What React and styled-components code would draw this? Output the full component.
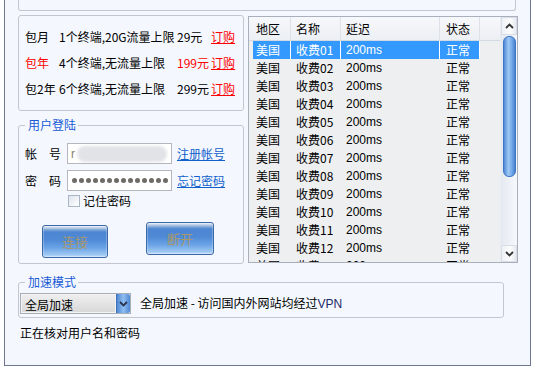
import React from 'react';
import styled, { createGlobalStyle } from 'styled-components';

const Global = createGlobalStyle`
  html, body { margin: 0; padding: 0; background: #ffffff; }
  body { font-family: "Noto Sans CJK SC", sans-serif; font-size: 12px; }
  * { box-sizing: border-box; }
`;

const CJK = `"Noto Sans CJK SC", sans-serif`;
const LATIN = `"Liberation Sans", "Noto Sans CJK SC", sans-serif`;

const Window = styled.div`
  margin-left: 4px;
  width: 527px;
  height: 366px;
  border: 1px solid #6d7890;
  border-top: none;
  background: #f4f8fe;
  padding-left: 13px;
  display: flex;
  flex-direction: column;
  color: #000;
  font: 12px/16px ${CJK};
`;

const TopBox = styled.div`
  width: 498px;
  height: 11px;
  border: 1px solid #c3c6ce;
  border-top: none;
  border-radius: 0 0 3px 3px;
`;

const MainRow = styled.div`
  display: flex;
  align-items: flex-start;
  gap: 4px;
  margin-top: 4px;
`;

const LeftCol = styled.div`
  width: 226px;
  display: flex;
  flex-direction: column;
`;

const PriceBox = styled.div`
  height: 96px;
  border: 1px solid #c3c6ce;
  border-radius: 3px;
  padding: 8px 0 0 6px;
`;

const PriceRow = styled.div`
  display: grid;
  grid-template-columns: 34px 118px 34px auto;
  height: 26px;
  align-items: center;
  white-space: nowrap;
`;

const Cell = styled.span`
  color: ${p => (p.$red ? '#ff0000' : '#000')};
`;

const BuyLink = styled.a`
  color: #ff0000;
  text-decoration: underline;
  cursor: pointer;
`;

const Group = styled.fieldset`
  margin: ${p => p.$mt}px 0 0 0;
  min-width: 0;
  width: ${p => p.$w}px;
  border: 1px solid #c3c6ce;
  border-radius: 3px;
  padding: ${p => p.$pad};
`;

const Legend = styled.legend`
  color: #1a5ad6;
  font: 12px/14px ${CJK};
  padding: 0 2px 0 3px;
  margin-left: ${p => p.$ml}px;
`;

const FormRow = styled.div`
  display: flex;
  align-items: center;
  height: 21px;
  margin-top: ${p => p.$mt || 0}px;
`;

const Label = styled.span`
  width: 42px;
  white-space: pre;
`;

const InputBox = styled.div`
  width: 105px;
  height: 21px;
  border: 1px solid #b6b6be;
  background: #ffffff;
  display: flex;
  align-items: center;
  padding-left: 3px;
  overflow: hidden;
`;

const Masked = styled.span`
  color: #8a7f6a;
  font: 12px ${LATIN};
`;

const Blur = styled.div`
  width: 90px;
  height: 16px;
  margin-left: 2px;
  border-radius: 8px;
  background: #e2e3e7;
  filter: blur(1.5px);
`;

const Dots = styled.div`
  display: flex;
  gap: 2px;
  padding-left: 1px;
`;

const Dot = styled.span`
  width: 5px;
  height: 5px;
  border-radius: 50%;
  background: #6e6a66;
`;

const TextLink = styled.a`
  margin-left: 5px;
  color: #1060cc;
  text-decoration: underline;
  cursor: pointer;
`;

const CheckRow = styled.label`
  display: flex;
  align-items: center;
  height: 15px;
  margin-top: 2px;
  padding-left: 43px;
`;

const Check = styled.span`
  width: 12px;
  height: 12px;
  border: 1px solid #a9b6c8;
  background: linear-gradient(135deg, #dfe4ec, #ffffff);
  margin-right: 3px;
`;

const ButtonRow = styled.div`
  display: flex;
  align-items: flex-start;
  margin-top: 14px;
  padding-left: 17px;
  gap: 38px;
`;

const ActionButton = styled.button`
  width: ${p => p.$w}px;
  height: 33px;
  margin-top: ${p => p.$top}px;
  padding: 0;
  border: 1px solid #3b68a6;
  border-radius: 3px;
  background: linear-gradient(
    #e4ecf6 0px, #b9cce4 2px, #7aa4d8 4px, #4d86d2 6px,
    #4f8ad6 45%, #6aa3e6 70%, #9cc6f2 92%, #c4defa 100%
  );
  box-shadow: inset 0 0 0 1px rgba(255, 255, 255, 0.25);
  color: #a8976c;
  font: 13px ${CJK};
`;

const ListBox = styled.div`
  width: 270px;
  height: 247px;
  margin-top: 1px;
  border: 1px solid #a9b0bb;
  background: #eeeff1;
  display: flex;
  overflow: hidden;
`;

const Table = styled.div`
  flex: 1;
  display: flex;
  flex-direction: column;
  overflow: hidden;
  font: 12px/18px ${LATIN};
`;

const HeaderRow = styled.div`
  display: flex;
  height: 24px;
  flex-shrink: 0;
  border-bottom: 1px solid #d3d9e3;
  background: linear-gradient(#f7f8fb, #eceff4);
  font: 12px/23px ${CJK};
`;

const HeadCell = styled.div`
  width: ${p => p.$w}px;
  padding-left: ${p => p.$pl}px;
  border-right: 1px solid #dde2ea;
`;

const BodyRow = styled.div`
  display: flex;
  height: 18px;
  flex-shrink: 0;
  padding-left: 4px;
`;

const BodyCell = styled.div`
  width: ${p => p.$w}px;
  padding-left: ${p => p.$pl}px;
  white-space: nowrap;
  font-family: ${p => (p.$cjk ? CJK : LATIN)};
  background: ${p => (p.$sel ? '#3399ff' : 'transparent')};
  color: ${p => (p.$sel ? '#ffffff' : '#000')};
  border-right: 1px solid ${p => (p.$sel ? '#ffffff' : 'transparent')};
`;

const ScrollBar = styled.div`
  width: 17px;
  display: flex;
  flex-direction: column;
  align-items: center;
  background: linear-gradient(to right, #e4e9f1, #f6f8fb);
  border-left: 1px solid #e9edf3;
`;

const ArrowBtn = styled.div`
  width: 16px;
  height: ${p => p.$h}px;
  display: flex;
  align-items: center;
  justify-content: center;
  background: linear-gradient(to right, #eef1f6, #fbfcfd 60%, #e6eaf0);
  border: 1px solid #d9dee6;
`;

const Thumb = styled.div`
  width: 13px;
  height: 141px;
  margin-top: 1px;
  border: 1px solid #3d76c4;
  border-radius: 6px;
  background: linear-gradient(to right, #4f8ad6, #9ec8f4 40%, #76aaea 70%, #4a82d0);
`;

const Spacer = styled.div`
  flex: 1;
`;

const ModeRow = styled.div`
  display: flex;
  align-items: center;
`;

const Select = styled.div`
  width: 111px;
  height: 21px;
  display: flex;
  border: 1px solid #a8aeb8;
`;

const SelectText = styled.div`
  flex: 1;
  padding-left: 3px;
  line-height: 19px;
  background: linear-gradient(#eeeeee, #d9d9d9);
  border: 1px solid #f4f4f4;
`;

const SelectBtn = styled.div`
  width: 14px;
  display: flex;
  align-items: center;
  justify-content: center;
  border-radius: 0 2px 2px 0;
  background: linear-gradient(to right, #4f88d4, #8fbdf0 50%, #4f88d4);
  border-left: 1px solid #3e70b8;
`;

const ModeText = styled.span`
  margin-left: 9px;
`;

const Vpn = styled.span`
  color: #1c2a6a;
  font-family: ${LATIN};
`;

const Status = styled.div`
  margin-top: 7px;
  padding-left: 2px;
`;

const Chevron = ({ down, color = '#333' }) => (
  <svg width="9" height="6" viewBox="0 0 9 6">
    <path
      d={down ? 'M1 1 L4.5 4.5 L8 1' : 'M1 5 L4.5 1.5 L8 5'}
      fill="none"
      stroke={color}
      strokeWidth="1.8"
    />
  </svg>
);

const prices = [
  { name: '包月', desc: '1个终端,20G流量上限', price: '29元', red: false },
  { name: '包年', desc: '4个终端,无流量上限', price: '199元', red: true },
  { name: '包2年', desc: '6个终端,无流量上限', price: '299元', red: false },
];

const cols = [
  { w: 42, hpl: 7, bw: 38, bpl: 3 },
  { w: 50, hpl: 5, bw: 50, bpl: 5 },
  { w: 99, hpl: 5, bw: 99, bpl: 5 },
  { w: 40, hpl: 6, bw: 40, bpl: 6 },
];

const rows = Array.from({ length: 13 }, (_, i) => [
  '美国',
  '收费' + String(i + 1).padStart(2, '0'),
  '200ms',
  '正常',
]);

export default function App() {
  return (
    <>
      <Global />
      <Window>
        <TopBox />
        <MainRow>
          <LeftCol>
            <PriceBox>
              {prices.map(p => (
                <PriceRow key={p.name}>
                  <Cell $red={p.red}>{p.name}</Cell>
                  <Cell>{p.desc}</Cell>
                  <Cell $red={p.red}>{p.price}</Cell>
                  <BuyLink>订购</BuyLink>
                </PriceRow>
              ))}
            </PriceBox>
            <Group $mt={7} $w={226} $pad="11px 0 5px 6px">
              <Legend $ml={0}>用户登陆</Legend>
              <FormRow>
                <Label>帐　号</Label>
                <InputBox>
                  <Masked>r</Masked>
                  <Blur />
                </InputBox>
                <TextLink>注册帐号</TextLink>
              </FormRow>
              <FormRow $mt={6}>
                <Label>密　码</Label>
                <InputBox>
                  <Dots>
                    {Array.from({ length: 14 }, (_, i) => (
                      <Dot key={i} />
                    ))}
                  </Dots>
                </InputBox>
                <TextLink>忘记密码</TextLink>
              </FormRow>
              <CheckRow>
                <Check />
                记住密码
              </CheckRow>
              <ButtonRow>
                <ActionButton $w={66} $top={3}>连接</ActionButton>
                <ActionButton $w={68} $top={0}>断开</ActionButton>
              </ButtonRow>
            </Group>
          </LeftCol>
          <ListBox>
            <Table>
              <HeaderRow>
                {['地区', '名称', '延迟', '状态'].map((h, i) => (
                  <HeadCell key={h} $w={cols[i].w} $pl={cols[i].hpl}>
                    {h}
                  </HeadCell>
                ))}
              </HeaderRow>
              {rows.map((r, ri) => (
                <BodyRow key={ri}>
                  {r.map((c, ci) => (
                    <BodyCell
                      key={ci}
                      $w={cols[ci].bw}
                      $pl={cols[ci].bpl}
                      $sel={ri === 0}
                      $cjk={ci !== 2}
                    >
                      {c}
                    </BodyCell>
                  ))}
                </BodyRow>
              ))}
            </Table>
            <ScrollBar>
              <ArrowBtn $h={18}>
                <Chevron />
              </ArrowBtn>
              <Thumb />
              <Spacer />
              <ArrowBtn $h={17}>
                <Chevron down />
              </ArrowBtn>
            </ScrollBar>
          </ListBox>
        </MainRow>
        <Group $mt={11} $w={486} $pad="4px 0 3px 1px">
          <Legend $ml={5}>加速模式</Legend>
          <ModeRow>
            <Select>
              <SelectText>全局加速</SelectText>
              <SelectBtn>
                <Chevron down color="#2a3550" />
              </SelectBtn>
            </Select>
            <ModeText>
              全局加速 - 访问国内外网站均经过<Vpn>VPN</Vpn>
            </ModeText>
          </ModeRow>
        </Group>
        <Status>正在核对用户名和密码</Status>
      </Window>
    </>
  );
}
